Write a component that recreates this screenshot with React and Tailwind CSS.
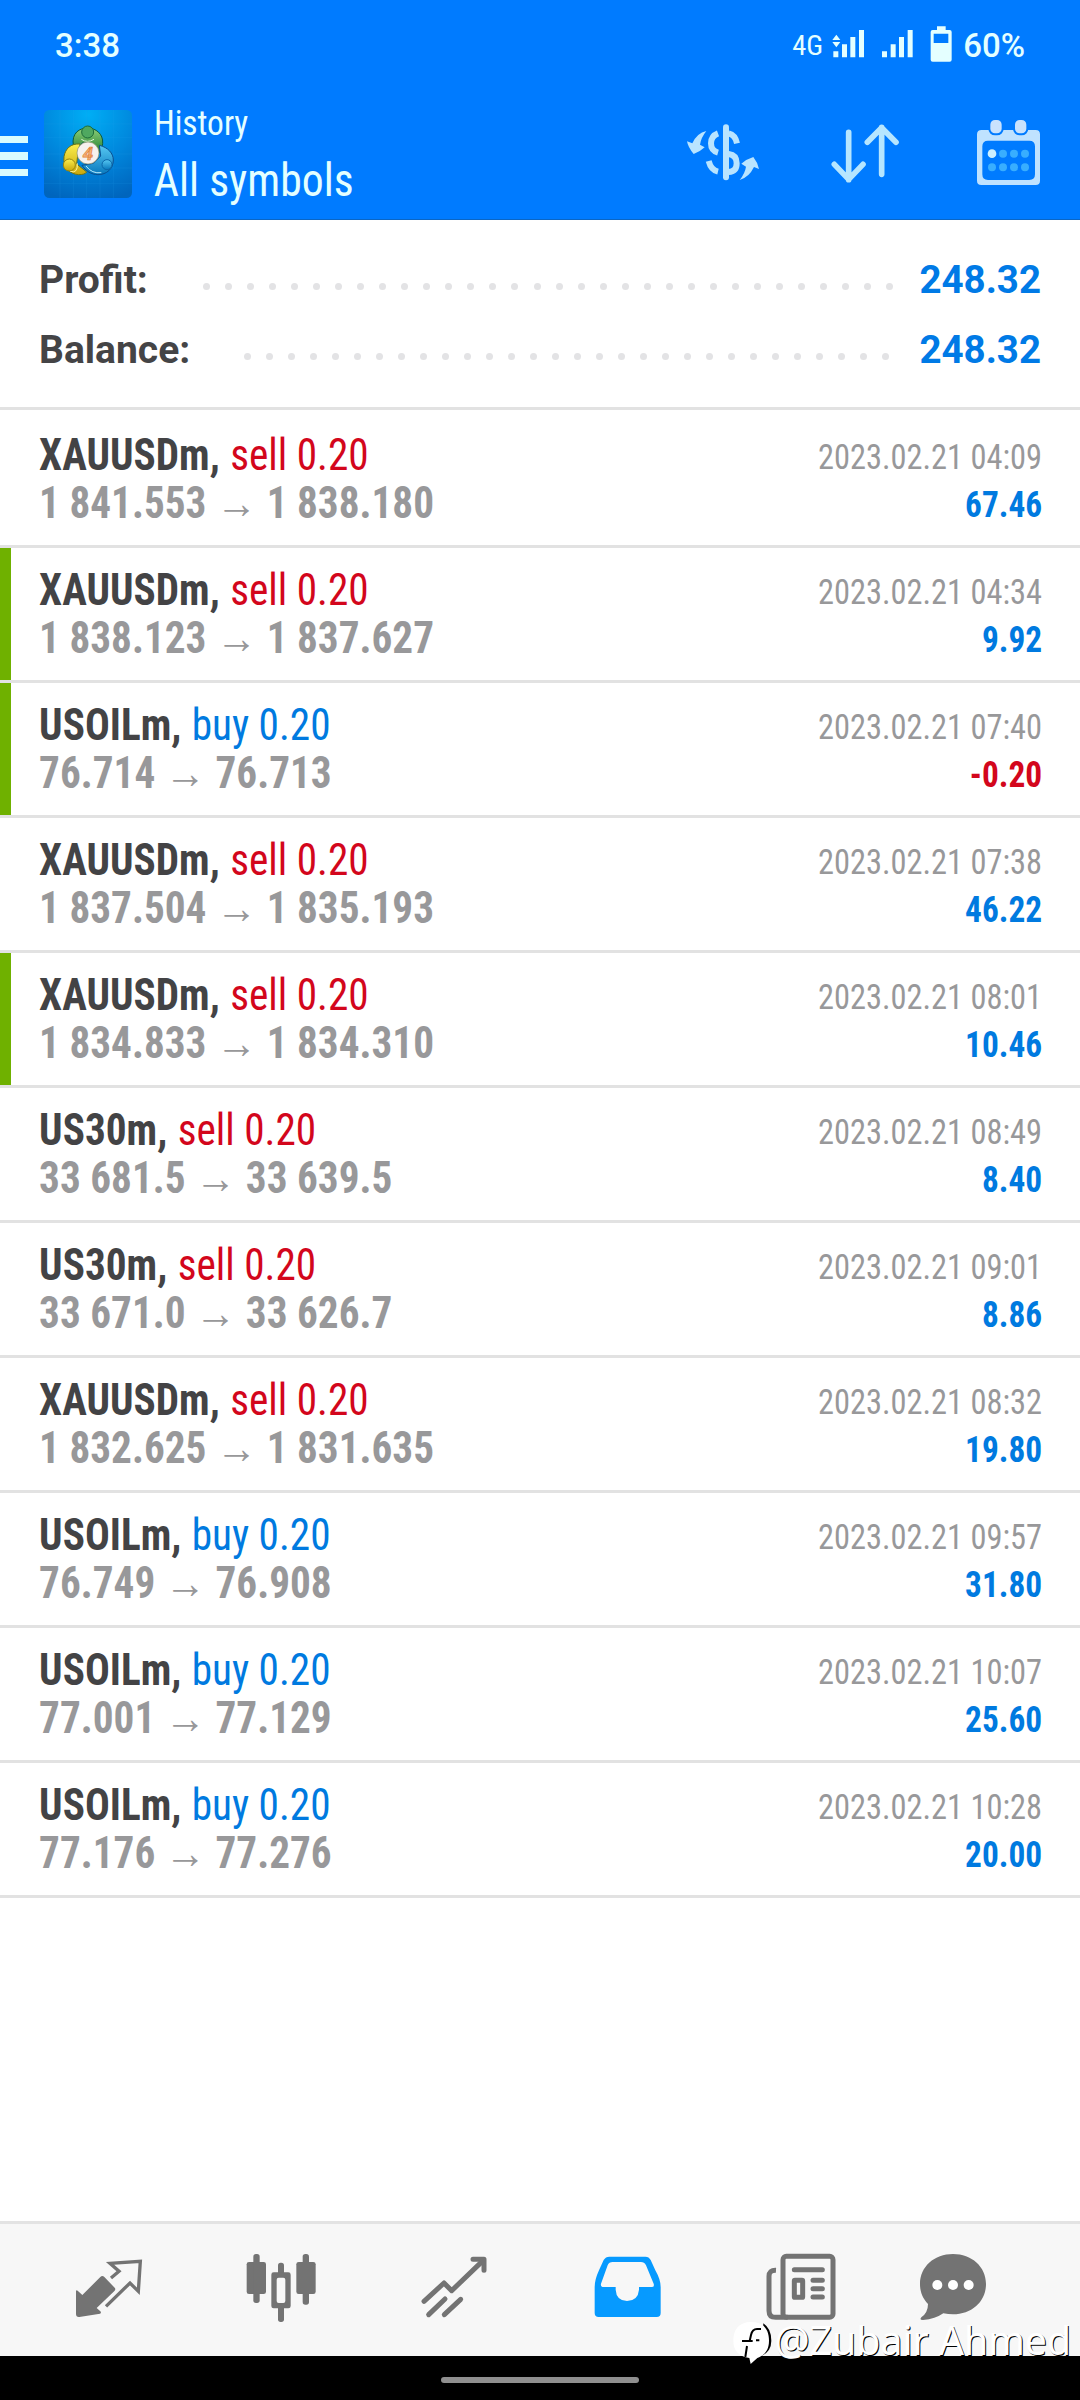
import React from 'react';

const deals = [
    { symbol: 'XAUUSDm', side: 'sell', open: '1 841.553', close: '1 838.180', time: '2023.02.21 04:09', profit: '67.46' },
    { symbol: 'XAUUSDm', side: 'sell', open: '1 838.123', close: '1 837.627', time: '2023.02.21 04:34', profit: '9.92', marked: true },
    { symbol: 'USOILm', side: 'buy', open: '76.714', close: '76.713', time: '2023.02.21 07:40', profit: '-0.20', marked: true },
    { symbol: 'XAUUSDm', side: 'sell', open: '1 837.504', close: '1 835.193', time: '2023.02.21 07:38', profit: '46.22' },
    { symbol: 'XAUUSDm', side: 'sell', open: '1 834.833', close: '1 834.310', time: '2023.02.21 08:01', profit: '10.46', marked: true },
    { symbol: 'US30m', side: 'sell', open: '33 681.5', close: '33 639.5', time: '2023.02.21 08:49', profit: '8.40' },
    { symbol: 'US30m', side: 'sell', open: '33 671.0', close: '33 626.7', time: '2023.02.21 09:01', profit: '8.86' },
    { symbol: 'XAUUSDm', side: 'sell', open: '1 832.625', close: '1 831.635', time: '2023.02.21 08:32', profit: '19.80' },
    { symbol: 'USOILm', side: 'buy', open: '76.749', close: '76.908', time: '2023.02.21 09:57', profit: '31.80' },
    { symbol: 'USOILm', side: 'buy', open: '77.001', close: '77.129', time: '2023.02.21 10:07', profit: '25.60' },
    { symbol: 'USOILm', side: 'buy', open: '77.176', close: '77.276', time: '2023.02.21 10:28', profit: '20.00' },
];

const StatusBar = () => (
    <div className="flex h-[92px] items-center px-[55px] text-[33px] font-medium text-[#e4ffff]">
        <span className="flex-1">3:38</span>
        <span className="mr-[9px] font-['Roboto_Condensed',sans-serif] text-[28.5px] font-normal leading-none">4G</span>
        {/* SIM 1, SIM 2, battery */}
        <svg className="-mt-1 h-9 w-[32px]" viewBox="516 78 96 108" fill="#e4ffff">
            <path d="M517 120l12-16 12 16zM517 126l12 16 12-16z" />
            <path d="M520 154h15v18h-15zM546 133h15v39h-15zM571 111h15v61h-15zM597 90h15v82h-15z" />
        </svg>
        <svg className="-mt-1 ml-[17px] h-9 w-[32px]" viewBox="664 78 96 108" fill="#e4ffff">
            <path d="M667 154h15v18h-15zM693 133h15v39h-15zM718 111h15v61h-15zM744 90h15v82h-15z" />
        </svg>
        <svg className="-mt-1 ml-[17px] h-9 w-[22px]" viewBox="811 78 66 108" fill="#e4ffff">
            <path fillRule="evenodd" d="M832 79h26v11h12q6 0 6 6v83q0 6-6 6h-51q-6 0-6-6V96q0-6 6-6h13zM822 101v28h44v-28z" />
        </svg>
        <span className="ml-[11px]">60%</span>
    </div>
);

const AppLogo = () => (
    <svg className="ml-4 mt-[18px] h-[88px] w-[88px] self-start" viewBox="24 16 264 264">
        <defs>
            <radialGradient id="tile" cx="0.5" cy="0.05" r="1">
                <stop offset="0" stopColor="#00aef5" />
                <stop offset="0.55" stopColor="#0086dc" />
                <stop offset="1" stopColor="#0065bd" />
            </radialGradient>
            <linearGradient id="green" x1="0" y1="0" x2="0" y2="1">
                <stop offset="0" stopColor="#8ed07a" />
                <stop offset="1" stopColor="#1c7a2c" />
            </linearGradient>
            <linearGradient id="yellow" x1="0" y1="0" x2="0" y2="1">
                <stop offset="0" stopColor="#fbee4c" />
                <stop offset="1" stopColor="#c9a70c" />
            </linearGradient>
            <linearGradient id="cyan" x1="0" y1="0" x2="0" y2="1">
                <stop offset="0" stopColor="#57c8f2" />
                <stop offset="1" stopColor="#0878bd" />
            </linearGradient>
        </defs>
        <rect x="24" y="16" width="264" height="264" rx="16" fill="url(#tile)" />
        <path d="M72 16v264M112 16v264M152 16v264M192 16v264M232 16v264M24 58h264M24 98h264M24 148h264M24 190h264M24 236h264" stroke="#29a2ee" strokeWidth="1.5" opacity="0.3" />
        <g strokeWidth="3">
            <path d="M112 122C106 84 132 70 154 70c26 0 48 18 46 46-1 18-8 26-14 32l-14-30-32-4-16 16z" fill="url(#green)" stroke="#0c5a3c" />
            <path d="M132 118c-28-2-44 14-48 38-4 30 16 52 44 54 12 0 20-2 24-8l-30-24 4-34z" fill="url(#yellow)" stroke="#6f7414" />
            <path d="M190 122c26 6 42 24 42 44 0 26-20 44-46 44-20 0-38-12-48-28l34-6 22-22z" fill="url(#cyan)" stroke="#0a4e90" />
            <path d="M136 104q18 12 38 0" fill="none" stroke="#dff5d6" />
            <path d="M102 200q24 8 22-24" fill="none" stroke="#fff6a0" />
            <path d="M150 184q18 24 46 20" fill="none" stroke="#b9ecff" />
            <circle cx="155" cy="82" r="18" fill="#4fa860" stroke="#1d6c38" />
            <circle cx="100" cy="181" r="18" fill="url(#yellow)" stroke="#98860e" />
            <circle cx="213" cy="180" r="15" fill="url(#cyan)" stroke="#0b67aa" />
        </g>
        <circle cx="156" cy="145" r="33" fill="#f6f1ee" stroke="#8a8f6a" strokeWidth="2" />
        <text x="156" y="165" textAnchor="middle" fontSize="56" fontWeight="700" fontStyle="italic" fill="#f8b27a" stroke="#e08038" strokeWidth="2" fontFamily="Roboto, sans-serif">4</text>
    </svg>
);

const Header = () => (
    <header className="h-[220px] border-b border-[#0b66c4] bg-[#007bff]">
        <StatusBar />
        <div className="flex h-[127px] items-start">
            <div className="flex w-[28px] flex-col gap-[9px] pt-[43.5px]">
                <i className="h-[7.5px] bg-[#d9fbff]" />
                <i className="h-[7.5px] bg-[#d9fbff]" />
                <i className="h-[7.5px] bg-[#d9fbff]" />
            </div>
            <AppLogo />
            <div className="ml-[20px] flex-1 pt-[10px] font-['Roboto_Condensed',sans-serif] text-[#e4ffff]">
                <div className="origin-left scale-x-[0.955] pl-0.5 text-[35px] leading-[44px]">History</div>
                <div className="origin-left scale-x-[0.93] pl-0.5 text-[47px] leading-[68px]">All symbols</div>
            </div>
            {/* deals / sort / period */}
            <svg className="mt-[26px] h-[67px] w-[75px]" viewBox="75 354 225 201" fill="none" stroke="#b9e4ff" strokeWidth="18">
                <path d="M195 382v150" strokeLinecap="round" />
                <path d="M171 400q-21 8-21 30t21 28M171 515q-21-5-28-32" />
                <path d="M203 400q20 5 25 30M203 462q24 3 24 28t-24 26" />
                <g fill="#b9e4ff" stroke="none">
                    <path d="M136 393q-16 20-19 41l14 8q-16 15-33 20-17-20-20-38l16 6q14-31 42-37z" />
                    <path d="M236 540q16-20 19-40l-14-9q16-14 36-20 14 18 17 36l-15-6q-15 31-43 39z" />
                </g>
            </svg>
            <svg className="mt-[26px] ml-[69px] h-[67px] w-[70px]" viewBox="510 354 210 201" fill="none" stroke="#b6e6ff" strokeWidth="17" strokeLinecap="round" strokeLinejoin="round">
                <path d="M566 397v142M523 493l43 45 43-45" />
                <path d="M665 523V382M622 427l43-44 43 44" />
            </svg>
            <svg className="mt-[26px] ml-[75px] mr-[38px] h-[67px] w-[67px]" viewBox="945 354 201 201">
                <path fillRule="evenodd" fill="#bfe2ff" d="M965 390h162q13 0 13 13v139q0 13-13 13H964q-13 0-13-13V403q0-13 14-13zM984 422q-17 0-17 17v84q0 17 17 17h124q17 0 17-17v-84q0-17-17-17z" />
                <g fill="#c9e2fd" stroke="#007bff" strokeWidth="6">
                    <rect x="988" y="357" width="40" height="46" rx="17" />
                    <rect x="1062" y="357" width="40" height="46" rx="17" />
                </g>
                <g fill="#38aeff">
                    <circle cx="996" cy="461" r="13" fill="#cdf0ff" />
                    <circle cx="1029" cy="461" r="12" />
                    <circle cx="1062" cy="461" r="12" />
                    <circle cx="1095" cy="461" r="12" />
                    <circle cx="996" cy="502" r="12" />
                    <circle cx="1029" cy="502" r="12" />
                    <circle cx="1062" cy="502" r="12" />
                    <circle cx="1095" cy="502" r="12" />
                </g>
            </svg>
        </div>
    </header>
);

const SummaryRow = ({ label, value, dots, dotsClass }) => (
    <div className="flex h-[70px] items-center px-[39px] text-[39px] font-bold leading-[70px]">
        <span className="text-[#444446]">{label}</span>
        <div className={`mt-[13px] flex flex-1 justify-between ${dotsClass}`}>
            {Array.from({ length: dots }, (_, i) => (
                <i key={i} className="size-[7px] rounded-full bg-[#e3e3e5]" />
            ))}
        </div>
        <span className="text-[38.5px] text-[#007ae6]">{value}</span>
    </div>
);

const DealRow = ({ deal }) => (
    <li className="flex h-[135px] border-b-[3px] border-[#e2e2e2] font-['Roboto_Condensed',sans-serif] leading-[48px]">
        <div className={`w-[11px] ${deal.marked ? 'bg-[#6fb100]' : ''}`} />
        <div className="flex-1 origin-left scale-x-[0.937] pl-[30px] pt-[18px] text-[44px]">
            <div>
                <b className="mr-px font-bold text-[#434345]">{deal.symbol},</b>{' '}
                <span className={deal.side === 'sell' ? 'text-[#d3061c]' : 'text-[#007ae0]'}>{deal.side} 0.20</span>
            </div>
            <div className="font-bold text-[#98989a]">
                {deal.open} → {deal.close}
            </div>
        </div>
        <div className="origin-right scale-x-[0.913] pr-[42px] pt-[20px] text-right">
            <div className="text-[35.5px] text-[#98989a]">{deal.time}</div>
            <div className={`text-[36.5px] font-bold ${deal.profit.startsWith('-') ? 'text-[#d3061c]' : 'text-[#007ae0]'}`}>{deal.profit}</div>
        </div>
    </li>
);

const BottomNav = () => (
    <nav className="flex h-[135px] border-t-[3px] border-[#e3e3e3] bg-[#f7f7f7] pt-[26px] pl-[75px]">
        {/* quotes */}
        <svg className="h-[75px] w-[70px]" viewBox="45 30 210 225" fill="#737373">
            <path d="M48 153q1-4 5-1l14 13 54-54q6-6 12 0l31 32q4 4 0 9l-54 52 11 10q4 4-1 7l-62 10q-10 1-10-9z" />
            <path d="M153 114l24-20-27-24 91-6-6 90-25-25-72 70" fill="none" stroke="#737373" strokeWidth="10" />
        </svg>
        {/* chart */}
        <svg className="ml-[100px] h-[75px] w-[72px]" viewBox="555 30 216 225" fill="#737373">
            <rect x="560" y="66" width="58" height="96" rx="7" />
            <rect x="580" y="42" width="19" height="147" rx="8" />
            <rect x="709" y="66" width="58" height="96" rx="7" />
            <rect x="728" y="42" width="19" height="152" rx="8" />
            <rect x="654" y="68" width="18" height="40" rx="8" />
            <rect x="654" y="195" width="18" height="51" rx="8" />
            <path fillRule="evenodd" d="M641 97h44q7 0 7 7v94q0 7-7 7h-44q-7 0-7-7v-94q0-7 7-7zM656 113q-6 0-6 6v64q0 6 6 6h14q6 0 6-6v-64q0-6-6-6z" />
        </svg>
        {/* trade */}
        <svg className="ml-[103px] h-[75px] w-[70px]" viewBox="1080 30 210 225" fill="none" stroke="#737373" strokeWidth="15" strokeLinecap="round" strokeLinejoin="round">
            <path d="M1092 184l60-55 23 23 94-90" />
            <path d="M1239 58h33v33" />
            <path d="M1106 224l49-47M1153 224l49-46" />
        </svg>
        {/* history, active */}
        <svg className="ml-[103px] h-[75px] w-[70px]" viewBox="39 30 210 225" fill="#069aff">
            <path fillRule="evenodd" d="M88 50h108q11 0 16 10l14 31q16 28 16 50v78q0 12-12 12H56q-12 0-12-12v-78q0-22 13-50l14-31q6-10 17-10zM98 66q-11 0-15 10l-20 55q-2 10 8 10h36v8q2 33 34 34 33-1 36-34v-8h38q9 0 6-10l-23-55q-5-10-15-10z" />
        </svg>
        {/* news */}
        <svg className="ml-[102px] h-[75px] w-[72px]" viewBox="555 30 216 225" fill="none" stroke="#737373" strokeWidth="15">
            <rect x="609" y="49" width="150" height="183" rx="10" />
            <path d="M588 91q-21-1-21 18v103q0 20 20 20h36" />
            <path d="M643 89h84M699 121h28M699 146h28M699 171h28" strokeLinecap="round" />
            <rect x="643" y="121" width="25" height="51" rx="2" />
        </svg>
        {/* messages */}
        <svg className="ml-[81px] h-[75px] w-[70px]" viewBox="1014 30 210 225" fill="#737373">
            <path fillRule="evenodd" d="M1119 42c56 0 99 38 99 90s-42 91-99 91q-14 0-29-3-24 17-61 20-12 0-5-8 20-14 20-40c-17-18-24-38-24-60 0-52 43-90 99-90z" />
            <g fill="#fff">
                <circle cx="1072" cy="135" r="15" />
                <circle cx="1119" cy="135" r="15" />
                <circle cx="1166" cy="135" r="15" />
            </g>
        </svg>
    </nav>
);

const AuthorTag = () => (
    <div className="absolute right-[9px] bottom-[34px] flex items-start">
        <svg className="mt-1 h-[46px] w-[42px]" viewBox="454 240 126 138">
            <path d="M548 250q24 16 24 52 0 32-30 46z" fill="#000" />
            <path d="M512 246c38 0 53 24 53 56 0 30-15 44-35 52l-20 18-4-18c-32-6-48-22-48-52 0-32 16-56 54-56z" fill="#fff" />
            <path d="M541 267h-12q-14 0-18 18l-4 18M484 303h32M499 318l-5 33M526 301h10" fill="none" stroke="#000" strokeWidth="6" />
        </svg>
        <span className="font-['Noto_Sans',sans-serif] text-[39.2px] leading-[48px] text-white [text-shadow:1px_0.5px_0_#000]">@Zubair Ahmed</span>
    </div>
);

export default function App() {
    return (
        <div className="relative flex h-[2400px] w-[1080px] flex-col overflow-hidden bg-white font-['Roboto',sans-serif]">
            <Header />
            <section className="h-[190px] border-b-[3px] border-[#e2e2e2] pt-[25px]">
                <SummaryRow label="Profit:" value="248.32" dots={32} dotsClass="ml-[55px] mr-[26px]" />
                <SummaryRow label="Balance:" value="248.32" dots={30} dotsClass="ml-[54px] mr-[30px]" />
            </section>
            <ul className="flex-1 pt-[3px]">
                {deals.map((deal) => (
                    <DealRow key={deal.time} deal={deal} />
                ))}
            </ul>
            <BottomNav />
            {/* gesture bar */}
            <div className="flex h-[44px] justify-center bg-black pt-[21px]">
                <div className="h-1.5 w-[198px] rounded-full bg-[#8f8f8f]" />
            </div>
            <AuthorTag />
        </div>
    );
}
